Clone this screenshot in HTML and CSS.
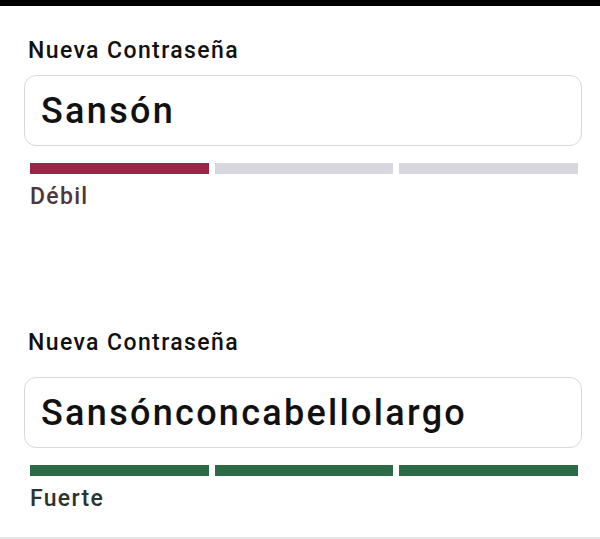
FILE: index.html
```html
<!DOCTYPE html>
<html lang="es">
<head>
<meta charset="utf-8">
<title>Nueva Contraseña</title>
<link rel="stylesheet" href="styles.css">
</head>
<body>
<div class="topbar"></div>
<main class="page">
  <section class="field">
    <label class="label">Nueva Contraseña</label>
    <div class="input">Sansón</div>
    <div class="meter">
      <span class="seg weak"></span>
      <span class="seg"></span>
      <span class="seg"></span>
    </div>
    <div class="status status-weak">Débil</div>
  </section>
  <section class="field field-loose">
    <label class="label">Nueva Contraseña</label>
    <div class="input">Sansónconcabellolargo</div>
    <div class="meter">
      <span class="seg strong"></span>
      <span class="seg strong"></span>
      <span class="seg strong"></span>
    </div>
    <div class="status status-strong">Fuerte</div>
  </section>
</main>
</body>
</html>
```
FILE: styles.css
```css
* { box-sizing: border-box; }
html, body { margin: 0; padding: 0; background: #fff; }
body {
  font-family: Roboto, "Liberation Sans", sans-serif;
  width: 600px;
  height: 539px;
  overflow: hidden;
  border-bottom: 2px solid #e6e6e6;
}
.topbar { height: 6px; background: #000; }
.page {
  display: flex;
  flex-direction: column;
  gap: 121px;
  padding: 32px 18px 0 24px;
}
.field { display: flex; flex-direction: column; }
.label {
  font-size: 23px;
  line-height: 26px;
  font-weight: 500;
  letter-spacing: 1.4px;
  color: #111;
  padding-left: 4px;
}
.input {
  margin-top: 11px;
  height: 71px;
  border: 1.5px solid #d9d9d9;
  border-radius: 12px;
  padding: 0 16px;
  display: flex;
  align-items: center;
  font-size: 36px;
  font-weight: 500;
  letter-spacing: 2.3px;
  color: #111;
}
.field-loose .input { margin-top: 21px; }
.meter {
  display: flex;
  gap: 6px;
  margin-top: 17px;
  padding: 0 4px 0 6px;
}
.seg {
  flex: 1;
  height: 11px;
  background: #d8d7df;
}
.seg.weak { background: #9c2447; }
.seg.strong { background: #2d6a48; }
.status {
  margin-top: 11px;
  padding-left: 6px;
  font-size: 23px;
  line-height: 24px;
  font-weight: 500;
  letter-spacing: 1.3px;
}
.status-weak { color: #4f363a; }
.status-strong { color: #2b332e; }
```
